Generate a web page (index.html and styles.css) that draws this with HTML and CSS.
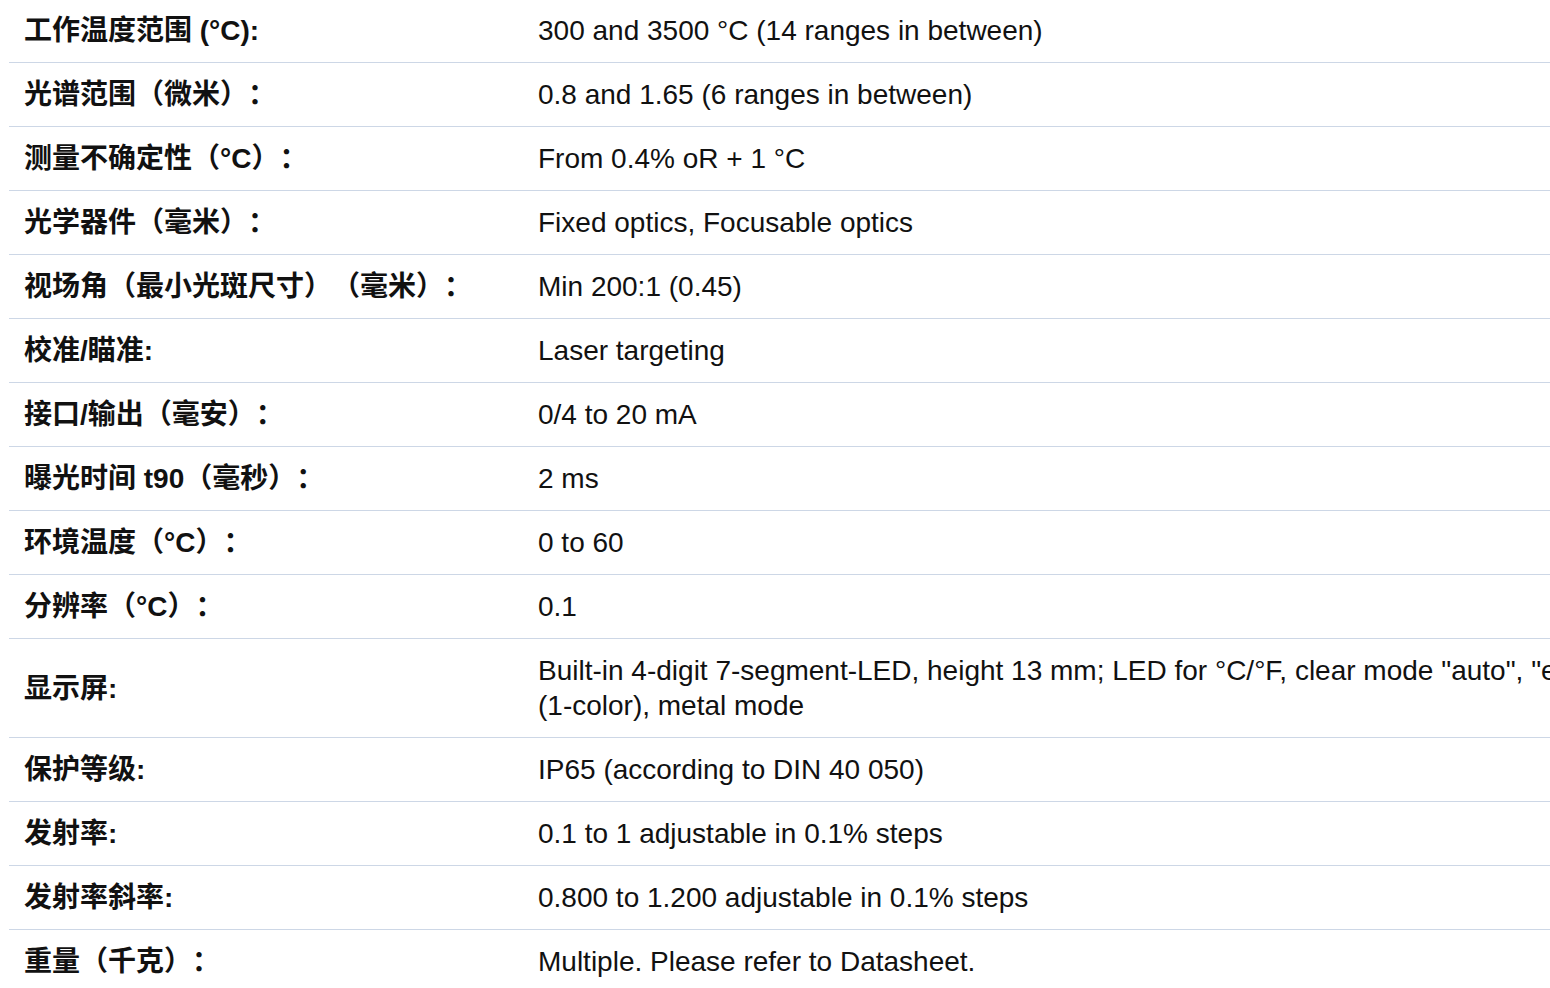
FILE: index.html
```html
<!DOCTYPE html>
<html lang="zh-CN">
<head>
<meta charset="utf-8">
<title>技术参数</title>
<link rel="stylesheet" href="styles.css">
</head>
<body>
<div class="spec-wrap">
<table class="spec-table">
  <colgroup><col class="col-label"><col class="col-value"></colgroup>
  <tbody>
    <tr><th>工作温度范围 (°C):</th><td>300 and 3500 °C (14 ranges in between)</td></tr>
    <tr><th>光谱范围（微米）：</th><td>0.8 and 1.65 (6 ranges in between)</td></tr>
    <tr><th>测量不确定性（°C）：</th><td>From 0.4% oR + 1 °C</td></tr>
    <tr><th>光学器件（毫米）：</th><td>Fixed optics, Focusable optics</td></tr>
    <tr><th>视场角（最小光斑尺寸）（毫米）：</th><td>Min 200:1 (0.45)</td></tr>
    <tr><th>校准/瞄准:</th><td>Laser targeting</td></tr>
    <tr><th>接口/输出（毫安）：</th><td>0/4 to 20 mA</td></tr>
    <tr><th>曝光时间 t90（毫秒）：</th><td>2 ms</td></tr>
    <tr><th>环境温度（°C）：</th><td>0 to 60</td></tr>
    <tr><th>分辨率（°C）：</th><td>0.1</td></tr>
    <tr><th>显示屏:</th><td>Built-in 4-digit 7-segment-LED, height 13 mm; LED for °C/°F, clear mode "auto", "external", "hold" <span class="nobr">(1-color),</span> metal mode</td></tr>
    <tr><th>保护等级:</th><td>IP65 (according to DIN 40 050)</td></tr>
    <tr><th>发射率:</th><td>0.1 to 1 adjustable in 0.1% steps</td></tr>
    <tr><th>发射率斜率:</th><td>0.800 to 1.200 adjustable in 0.1% steps</td></tr>
    <tr><th>重量（千克）：</th><td>Multiple. Please refer to Datasheet.</td></tr>
  </tbody>
</table>
</div>
</body>
</html>
```
FILE: styles.css
```css
html {
  overflow: hidden;
  background: #fff;
}
body {
  margin: 0 0 0 9px;
  font-family: "Liberation Sans", Arial, "Noto Sans CJK SC", sans-serif;
  color: #111;
  text-spacing-trim: space-all;
}
.spec-wrap {
  overflow: hidden;
}
.spec-table {
  border-collapse: collapse;
  table-layout: fixed;
  width: 1813px;
  margin-top: -1px;
  font-size: 28px;
  line-height: 35px;
}
.col-label { width: 513px; }
.col-value { width: 1300px; }
.spec-table th,
.spec-table td {
  padding: 14px 16px 14px 15px;
  border-bottom: 1px solid #cdd7e6;
  vertical-align: middle;
  text-align: left;
}
.spec-table th {
  font-weight: bold;
  white-space: nowrap;
}
.spec-table td {
  font-weight: normal;
  padding-left: 16px;
}
.nobr {
  white-space: nowrap;
}
```
